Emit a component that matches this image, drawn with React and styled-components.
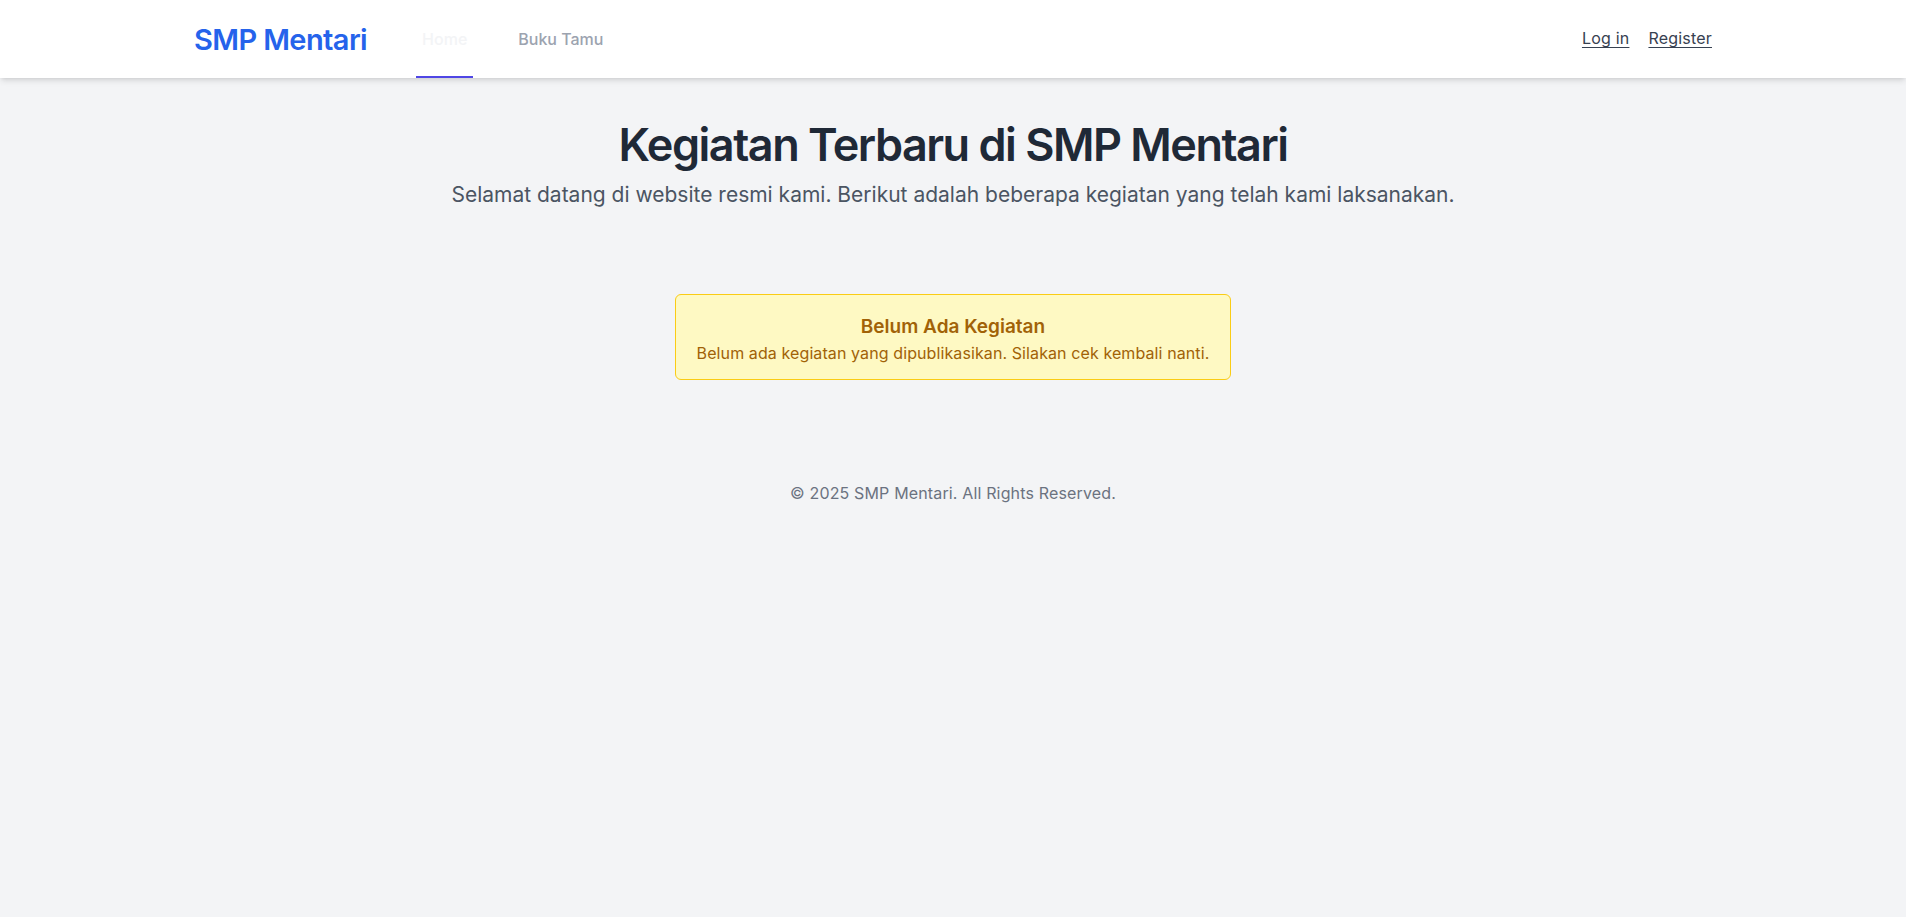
import React from "react";
import styled, { createGlobalStyle } from "styled-components";

const GlobalStyle = createGlobalStyle`
  html, body {
    margin: 0;
    padding: 0;
    background: #f3f4f6;
    font-family: Inter, "Noto Sans", Arial, sans-serif;
    -webkit-font-smoothing: antialiased;
  }
  * { box-sizing: border-box; }
`;

const Page = styled.div`
  min-height: 917px;
  background: #f3f4f6;
`;

const Header = styled.header`
  background: #ffffff;
  box-shadow: 0 4px 6px -1px rgba(0, 0, 0, 0.1), 0 2px 4px -2px rgba(0, 0, 0, 0.1);
  position: relative;
  z-index: 1;
`;

const HeaderInner = styled.nav`
  max-width: 1536px;
  margin: 0 auto;
  padding: 0 9px;
  height: 78px;
  display: flex;
  align-items: stretch;
  justify-content: space-between;
`;

const LeftGroup = styled.div`
  display: flex;
  align-items: stretch;
`;

const Logo = styled.a`
  display: flex;
  align-items: center;
  font-size: 29px;
  font-weight: 600;
  color: #2563eb;
  text-decoration: none;
  letter-spacing: -0.6px;
  margin-right: 49px;
`;

const NavLinks = styled.div`
  display: flex;
  align-items: stretch;
  gap: 39px;
`;

const NavLink = styled.a`
  display: flex;
  align-items: center;
  padding: 2px 6px 0;
  font-size: 16px;
  font-weight: 500;
  text-decoration: none;
  color: ${(p) => (p.$active ? "#f3f4f6" : "#9ca3af")};
  border-bottom: 2px solid ${(p) => (p.$active ? "#4f46e5" : "transparent")};
`;

const AuthLinks = styled.div`
  display: flex;
  align-items: center;
  gap: 19px;
  padding-bottom: 2px;
`;

const AuthLink = styled.a`
  font-size: 16px;
  letter-spacing: 0.2px;
  color: #374151;
  text-decoration: underline;
  text-underline-offset: 3px;
`;

const Main = styled.main`
  padding-top: 44px;
  display: flex;
  flex-direction: column;
  align-items: center;
  text-align: center;
`;

const Title = styled.h1`
  margin: 0;
  font-size: 45px;
  line-height: 1;
  font-weight: 600;
  color: #1f2937;
  letter-spacing: -1.5px;
`;

const Subtitle = styled.p`
  margin: 14px 0 0;
  font-size: 21px;
  line-height: 28px;
  color: #4b5563;
`;

const EmptyCard = styled.div`
  margin-top: 85px;
  width: 556px;
  background: #fef9c3;
  border: 1px solid #facc15;
  border-radius: 6px;
  padding: 18px 16px 14px;
  color: #a16207;
`;

const CardTitle = styled.h3`
  margin: 0;
  font-size: 19px;
  line-height: 28px;
  font-weight: 600;
`;

const CardText = styled.p`
  margin: 0;
  font-size: 16px;
  line-height: 24px;
  letter-spacing: 0.1px;
`;

const Footer = styled.footer`
  margin-top: 101px;
  font-size: 16px;
  line-height: 24px;
  letter-spacing: 0.15px;
  color: #6b7280;
  text-align: center;
`;

export default function App() {
  return (
    <Page>
      <GlobalStyle />
      <Header>
        <HeaderInner>
          <LeftGroup>
            <Logo href="#">SMP Mentari</Logo>
            <NavLinks>
              <NavLink href="#" $active>
                Home
              </NavLink>
              <NavLink href="#">Buku Tamu</NavLink>
            </NavLinks>
          </LeftGroup>
          <AuthLinks>
            <AuthLink href="#">Log in</AuthLink>
            <AuthLink href="#">Register</AuthLink>
          </AuthLinks>
        </HeaderInner>
      </Header>
      <Main>
        <Title>Kegiatan Terbaru di SMP Mentari</Title>
        <Subtitle>
          Selamat datang di website resmi kami. Berikut adalah beberapa kegiatan yang telah kami laksanakan.
        </Subtitle>
        <EmptyCard>
          <CardTitle>Belum Ada Kegiatan</CardTitle>
          <CardText>Belum ada kegiatan yang dipublikasikan. Silakan cek kembali nanti.</CardText>
        </EmptyCard>
        <Footer>© 2025 SMP Mentari. All Rights Reserved.</Footer>
      </Main>
    </Page>
  );
}
